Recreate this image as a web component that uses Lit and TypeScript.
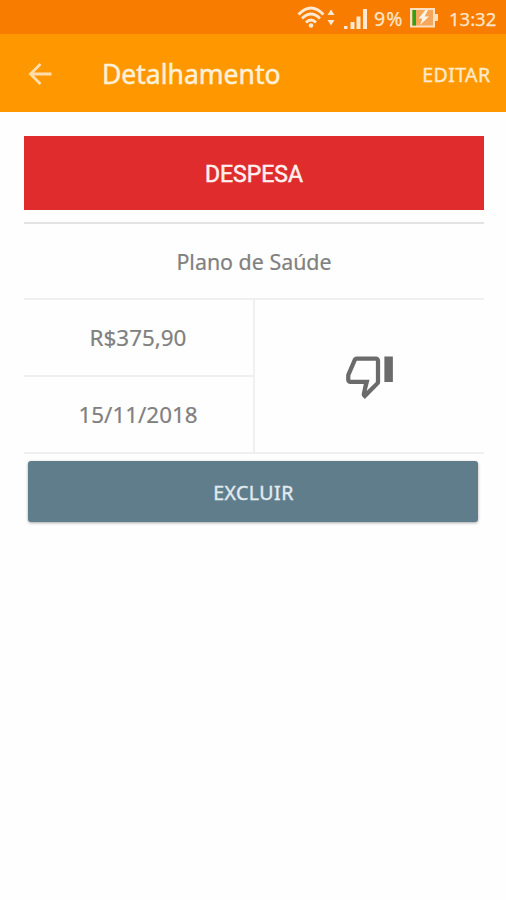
import { LitElement, html, css } from "lit";
import { customElement } from "lit/decorators.js";

@customElement("status-bar")
class StatusBar extends LitElement {
  static styles = css`
    :host { display: flex; box-sizing: border-box; height: 34px; background: #f77c00; color: #ffe6cb; padding: 2px 10px 0 0; justify-content: flex-end; align-items: center; }
    svg { display: block; flex: none; }
    .wifi { margin-right: 9px; }
    .signal { margin-right: 7px; }
    .battery { margin-left: 6px; margin-right: 11px; }
    .text { font-size: 18.5px; line-height: 32px; padding-top: 1px; white-space: nowrap; -webkit-text-stroke: 0.25px #ffe6cb; }
    .percent { font-size: 19.5px; letter-spacing: 1px; width: 30px; }
    .clock { width: 47px; }
  `;
  render() {
    return html`
      <svg class="wifi" width="38" height="24" viewBox="0 0 38 24" fill="none" stroke="#ffe9d2" stroke-width="2.8">
        <path d="M1.500 8.500Q14 -4.500 26.500 8.500M5 12.500Q14 3.500 23 12.500M9 16.400Q14 11.400 19 16.400" />
        <circle cx="14" cy="19.500" r="2.300" fill="#ffe9d2" stroke="none" />
        <path d="M30.500 9L34 3.500L37.500 9ZM30.500 14L34 19.500L37.500 14Z" fill="#ffe9d2" stroke="none" />
      </svg>
      <svg class="signal" width="23" height="21" viewBox="0 0 23 21" fill="#ffe9d2">
        <path d="M0 18h3.500v3H0zM6.500 14h4V21h-4zM12.500 8.500h4V21h-4zM19 1h4v20h-4z" />
      </svg>
      <span class="text percent">9%</span>
      <svg class="battery" width="28" height="20" viewBox="0 0 28 20">
        <rect x="1" y="1" width="23" height="17.500" fill="#f5a85c" stroke="#ffdfbd" stroke-width="2" />
        <rect x="2.500" y="2" width="3.500" height="15.500" fill="#25a51b" />
        <path d="M25 6h3v7h-3z" fill="#ffdfbd" />
        <path d="M15.500 2L8.500 10.500H12.500L10 17L19 8.500H14.500L18 2Z" fill="#fff5e6" />
      </svg>
      <span class="text clock">13:32</span>
    `;
  }
}

@customElement("app-toolbar")
class AppToolbar extends LitElement {
  static styles = css`
    :host { display: flex; box-sizing: border-box; height: 78px; background: #ff9800; align-items: center; padding: 0 16px 0 28px; }
    svg { display: block; flex: none; }
    .title { margin-left: 50px; font-size: 26.500px; line-height: 36px; color: #fff0da; flex: 1; white-space: nowrap; padding-top: 2px; -webkit-text-stroke: 0.5px #fff0da; }
    .edit { font-size: 19.5px; letter-spacing: 0.4px; line-height: 28px; color: #ffe8cc; white-space: nowrap; padding-top: 3px; margin-right: -0.5px; -webkit-text-stroke: 0.4px #ffe8cc; }
  `;
  render() {
    return html`
      <svg width="24" height="24" viewBox="0 0 24 24" fill="none" stroke="#ffddad" stroke-width="2.800">
        <path d="M23.500 13H3M12.500 3L2.500 13L12.500 23" />
      </svg>
      <span class="title">Detalhamento</span>
      <span class="edit">EDITAR</span>
    `;
  }
}

@customElement("app-root")
class AppRoot extends LitElement {
  static styles = css`
    :host { display: block; height: 900px; background: #fefefe; font-family: "Noto Sans", "Open Sans", sans-serif; overflow: hidden; }
    .body { padding: 24px 22px 0 24px; }
    .kind { height: 74px; background: #e02c2c; color: #fff0ef; display: flex; align-items: center; justify-content: center; font-size: 23px; -webkit-text-stroke: 0.5px #fff0ef; }
    .label { font-family: Roboto, sans-serif; padding-top: 2px; }
    .name { margin-top: 12px; height: 74px; border-top: 2px solid #e3e3e3; display: flex; align-items: center; justify-content: center; font-size: 21.4px; }
    .grid { display: grid; grid-template-columns: 231px 1fr; border-top: 2px solid #f0f0f0; border-bottom: 2px solid #f0f0f0; height: 152px; }
    .name, .cell { color: #808080; white-space: nowrap; -webkit-text-stroke: 0.2px #808080; }
    .left { display: grid; grid-template-rows: 75px 75px; row-gap: 2px; background: #f0f0f0; border-right: 2px solid #f0f0f0; }
    .cell { background: #fefefe; display: flex; align-items: center; justify-content: center; font-size: 22.4px; padding-right: 1px; }
    .thumb { display: flex; align-items: center; justify-content: center; }
    .thumb svg { display: block; margin-top: -2px; }
    .remove { margin: 7px 6px 0 4px; padding: 1px 0 0 1px; box-sizing: border-box; height: 61px; border-radius: 3px; background: #607d8b; color: #e2ebef; display: flex; align-items: center; justify-content: center; font-size: 19.500px; letter-spacing: 0.5px; -webkit-text-stroke: 0.4px #e2ebef; box-shadow: 0 1px 3px rgba(0, 0, 0, 0.35); }
  `;
  render() {
    return html`
      <status-bar></status-bar>
      <app-toolbar></app-toolbar>
      <div class="body">
        <div class="kind"><span class="label">DESPESA</span></div>
        <div class="name">Plano de Saúde</div>
        <div class="grid">
          <div class="left">
            <div class="cell">R$375,90</div>
            <div class="cell">15/11/2018</div>
          </div>
          <div class="thumb">
            <svg width="51" height="51" viewBox="0 0 24 24" fill="#6b6b6b">
              <path d="M15 3H6c-.83 0-1.54.5-1.84 1.220l-3.020 7.050c-.09.23-.14.47-.14.73v2c0 1.100.9 2 2 2h6.310l-.95 4.570-.03.32c0 .41.17.79.44 1.060L9.830 23l6.590-6.590c.36-.36.58-.86.58-1.410V5c0-1.100-.9-2-2-2zm0 12l-4.340 4.340L12 14H3v-2l3-7h9v10zm4-12h4v12h-4z" />
            </svg>
          </div>
        </div>
        <div class="remove">EXCLUIR</div>
      </div>
    `;
  }
}
